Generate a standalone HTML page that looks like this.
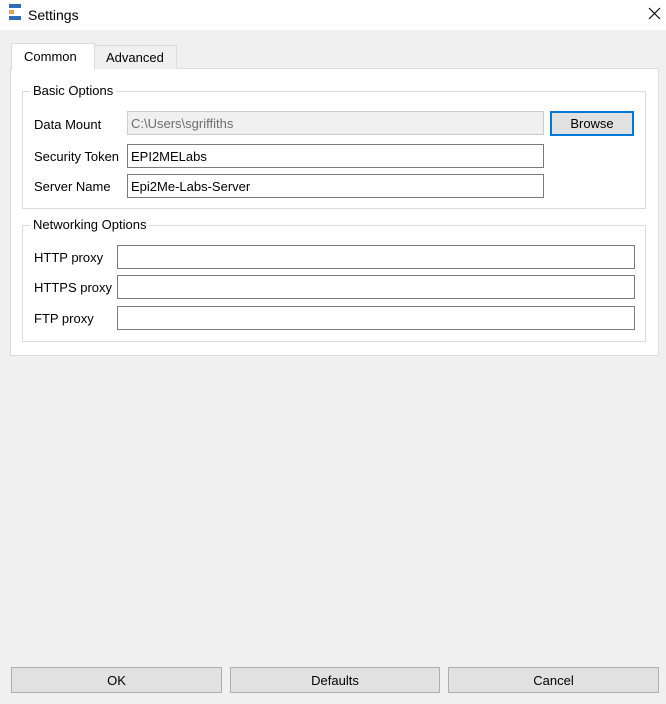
<!DOCTYPE html>
<html><head><style>
*{box-sizing:border-box;margin:0;padding:0}
body{width:666px;height:704px;background:#f0f0f0;font-family:"Liberation Sans",sans-serif;font-size:13px;color:#000;position:relative;overflow:hidden}
.a{position:absolute}
.t{position:absolute;white-space:nowrap;line-height:16px}
.in{position:absolute;background:#fff;border:1px solid #7a7a7a;padding:0 0 0 3px;line-height:24px}
.btn{position:absolute;background:#e1e1e1;border:1px solid #adadad;text-align:center;line-height:25px}
.gb{position:absolute;border:1px solid #dcdcdc}
.lg{position:absolute;background:#fff;padding:0 3px;line-height:16px}
</style></head><body>
<div class="a" style="left:0;top:0;width:666px;height:30px;background:#fff"></div>
<div class="a" style="left:9px;top:4px;width:12px;height:4px;background:#2e6db4"></div>
<div class="a" style="left:9px;top:10px;width:5px;height:4px;background:#e8a33c"></div>
<div class="a" style="left:9px;top:16px;width:12px;height:4px;background:#2e6db4"></div>
<div class="t" style="left:28px;top:7px;font-size:14px">Settings</div>
<svg class="a" style="left:648px;top:7px" width="13" height="13"><path d="M1 1L12 12M12 1L1 12" stroke="#000" stroke-width="1.1"/></svg>

<div class="a" style="left:10px;top:68px;width:649px;height:288px;background:#fff;border:1px solid #dcdcdc"></div>
<div class="a" style="left:94px;top:45px;width:83px;height:24px;background:#f0f0f0;border:1px solid #dcdcdc;border-bottom:none"></div>
<div class="t" style="left:106px;top:50px">Advanced</div>
<div class="a" style="left:11px;top:43px;width:84px;height:27px;background:#fff;border:1px solid #dcdcdc;border-bottom:none"></div>
<div class="t" style="left:24px;top:49px">Common</div>

<div class="gb" style="left:22px;top:91px;width:624px;height:118px"></div>
<div class="lg" style="left:30px;top:83px">Basic Options</div>
<div class="t" style="left:34px;top:117px">Data Mount</div>
<div class="in" style="left:127px;top:111px;width:417px;height:24px;background:#f0f0f0;border-color:#ccc;color:#6d6d6d">C:\Users\sgriffiths</div>
<div class="btn" style="left:550px;top:111px;width:84px;height:25px;border:2px solid #0078d7;line-height:22px">Browse</div>
<div class="t" style="left:34px;top:149px">Security Token</div>
<div class="in" style="left:127px;top:144px;width:417px;height:24px">EPI2MELabs</div>
<div class="t" style="left:34px;top:179px">Server Name</div>
<div class="in" style="left:127px;top:174px;width:417px;height:24px">Epi2Me-Labs-Server</div>

<div class="gb" style="left:22px;top:225px;width:624px;height:117px"></div>
<div class="lg" style="left:30px;top:217px">Networking Options</div>
<div class="t" style="left:34px;top:250px">HTTP proxy</div>
<div class="in" style="left:117px;top:245px;width:518px;height:24px"></div>
<div class="t" style="left:34px;top:280px">HTTPS proxy</div>
<div class="in" style="left:117px;top:275px;width:518px;height:24px"></div>
<div class="t" style="left:34px;top:311px">FTP proxy</div>
<div class="in" style="left:117px;top:306px;width:518px;height:24px"></div>

<div class="btn" style="left:11px;top:667px;width:211px;height:26px">OK</div>
<div class="btn" style="left:230px;top:667px;width:210px;height:26px">Defaults</div>
<div class="btn" style="left:448px;top:667px;width:211px;height:26px">Cancel</div>
</body></html>
